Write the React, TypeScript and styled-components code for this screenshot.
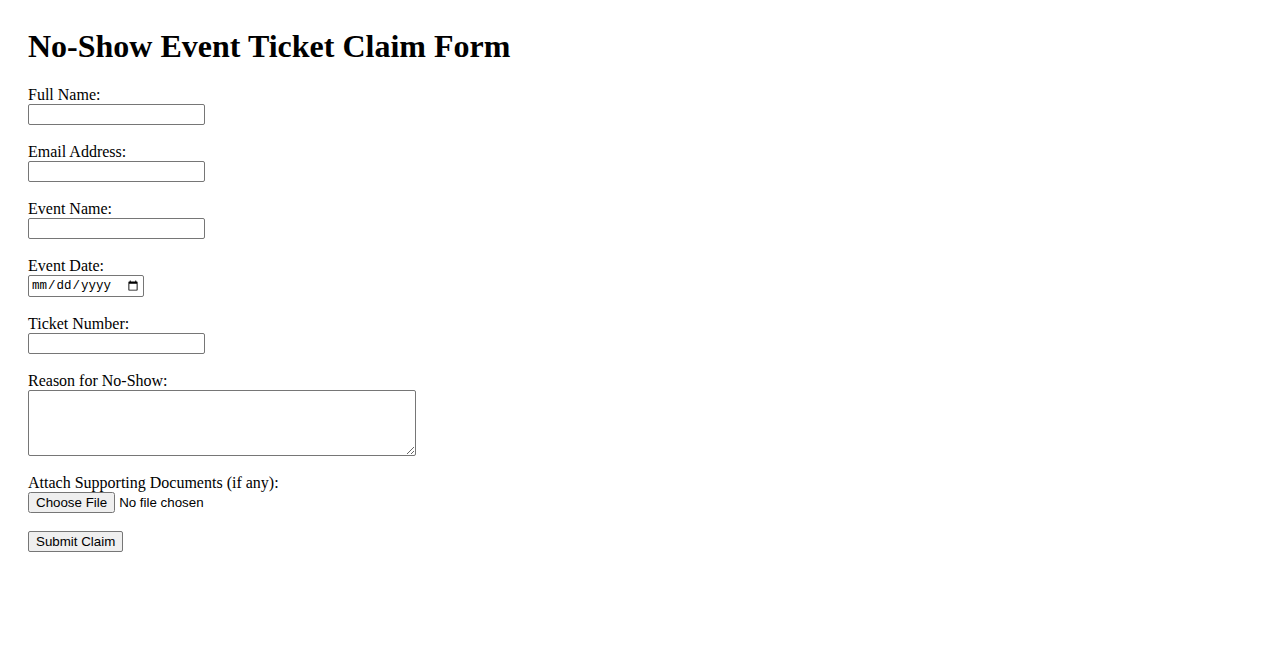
import React from 'react';
import styled, { createGlobalStyle } from 'styled-components';

const GlobalStyle = createGlobalStyle`
  body {
    margin: 8px;
    background: #ffffff;
    color: #000000;
    font-family: 'Liberation Serif', 'Times New Roman', serif;
    font-size: 16px;
  }
`;

const Page = styled.div`
  padding: 20px;
`;

const Title = styled.h1`
  font-size: 32px;
  font-weight: bold;
  margin: 0 0 21px;
`;

const Form = styled.form`
  display: flex;
  flex-direction: column;
  align-items: flex-start;
`;

const Field = styled.div`
  display: flex;
  flex-direction: column;
  align-items: flex-start;
  margin-bottom: 18px;
`;

const Label = styled.label`
  display: block;
  line-height: 18px;
`;

const controlFont = `
  font-family: 'Liberation Sans', Arial, sans-serif;
  font-size: 13.33px;
  box-sizing: border-box;
  margin: 0;
`;

const TextInput = styled.input`
  ${controlFont}
  width: 177px;
  height: 21px;
  padding: 1px 2px;
  border: 1px solid #767676;
  border-radius: 2px;
`;

const DateInput = styled.input`
  ${controlFont}
  font-family: 'Liberation Mono', 'Courier New', monospace;
  font-size: 12.5px;
  width: 116px;
  height: 22px;
  padding: 1px 2px;
  border: 1px solid #767676;
  border-radius: 2px;
`;

const TextArea = styled.textarea`
  ${controlFont}
  width: 388px;
  height: 66px;
  padding: 2px;
  border: 1px solid #767676;
  border-radius: 2px;
  resize: both;
`;

const FileInput = styled.input`
  ${controlFont}
  height: 21px;
`;

const Button = styled.button`
  ${controlFont}
  height: 21px;
  padding: 1px 7px;
  border: 1px solid #767676;
  border-radius: 2px;
  background: #efefef;
  color: #000;
`;

const App: React.FC = () => {
  return (
    <Page>
      <GlobalStyle />
      <Title>No-Show Event Ticket Claim Form</Title>
      <Form onSubmit={(e) => e.preventDefault()}>
        <Field>
          <Label htmlFor="fullName">Full Name:</Label>
          <TextInput type="text" id="fullName" />
        </Field>
        <Field>
          <Label htmlFor="email">Email Address:</Label>
          <TextInput type="email" id="email" />
        </Field>
        <Field>
          <Label htmlFor="eventName">Event Name:</Label>
          <TextInput type="text" id="eventName" />
        </Field>
        <Field>
          <Label htmlFor="eventDate">Event Date:</Label>
          <DateInput type="date" id="eventDate" />
        </Field>
        <Field>
          <Label htmlFor="ticket">Ticket Number:</Label>
          <TextInput type="text" id="ticket" />
        </Field>
        <Field>
          <Label htmlFor="reason">Reason for No-Show:</Label>
          <TextArea id="reason" />
        </Field>
        <Field>
          <Label htmlFor="docs">Attach Supporting Documents (if any):</Label>
          <FileInput type="file" id="docs" />
        </Field>
        <Button type="submit">Submit Claim</Button>
      </Form>
    </Page>
  );
};

export default App;
